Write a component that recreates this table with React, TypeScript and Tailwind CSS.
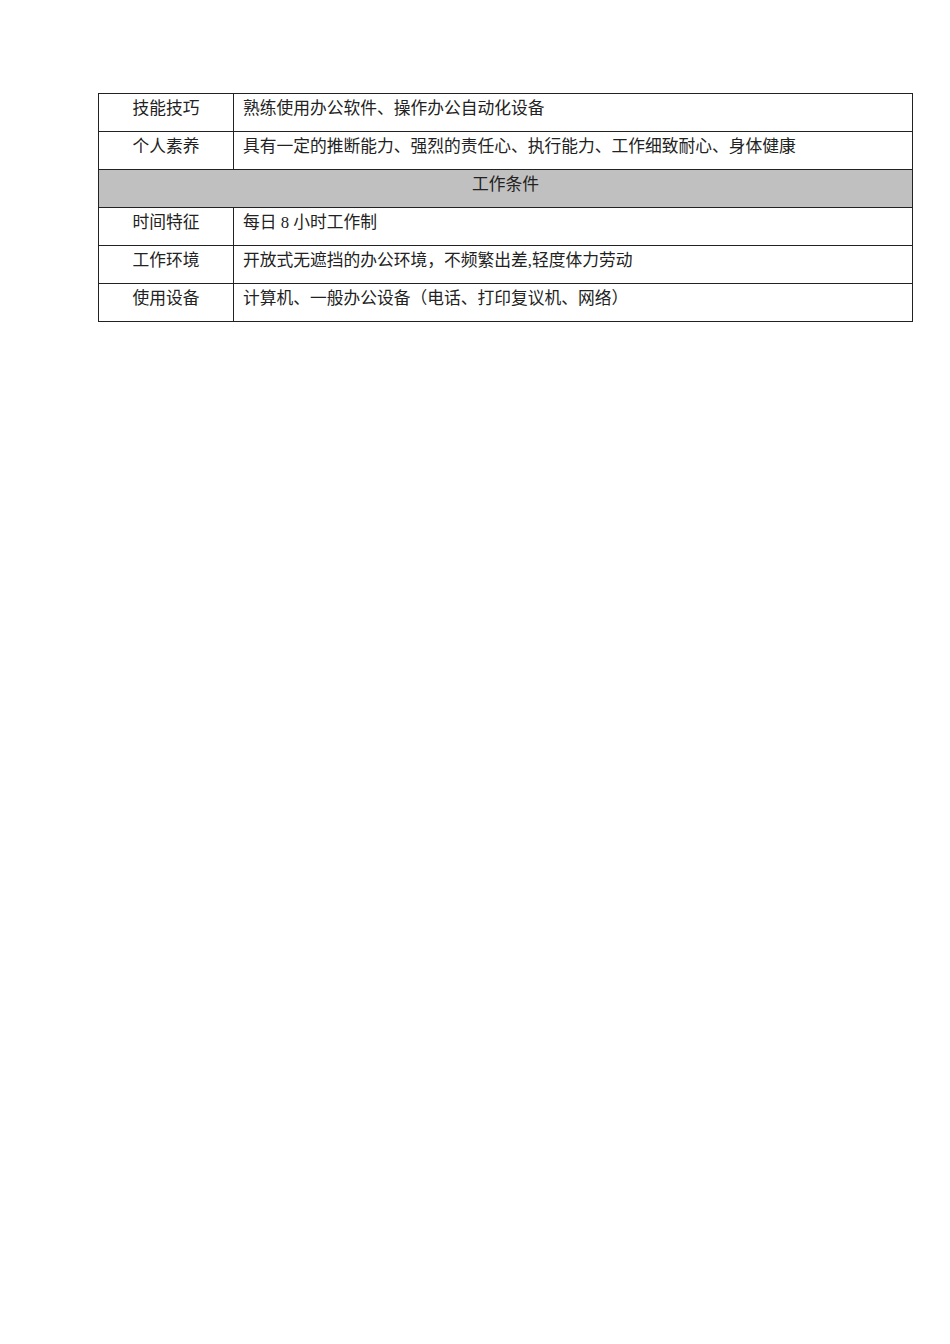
const rows: [string, string][] = [
  ["技能技巧", "熟练使用办公软件、操作办公自动化设备"],
  ["个人素养", "具有一定的推断能力、强烈的责任心、执行能力、工作细致耐心、身体健康"],
];

const rows2: [string, string][] = [
  ["时间特征", "每日 8 小时工作制"],
  ["工作环境", "开放式无遮挡的办公环境，不频繁出差,轻度体力劳动"],
  ["使用设备", "计算机、一般办公设备（电话、打印复议机、网络）"],
];

function Row({ label, value }: { label: string; value: string }) {
  return (
    <tr className="h-[38px]">
      <td className="w-[135px] border border-[#222] align-top pt-[4px] text-center">{label}</td>
      <td className="border border-[#222] align-top pt-[4px] pl-[9px]">{value}</td>
    </tr>
  );
}

export default function App() {
  return (
    <div
      className="min-h-[1344px] w-[950px] bg-white pt-[93px] pl-[98px] text-[16.75px] leading-[22px] text-[#222]"
      style={{ fontFamily: '"Liberation Serif", "Noto Sans CJK SC", serif' }}
    >
      <table className="w-[815px] border-collapse">
        <tbody>
          {rows.map(([l, v]) => (
            <Row key={l} label={l} value={v} />
          ))}
          <tr className="h-[38px]">
            <td colSpan={2} className="border border-[#222] bg-[#c0c0c0] align-top pt-[4px] text-center">
              工作条件
            </td>
          </tr>
          {rows2.map(([l, v]) => (
            <Row key={l} label={l} value={v} />
          ))}
        </tbody>
      </table>
    </div>
  );
}
